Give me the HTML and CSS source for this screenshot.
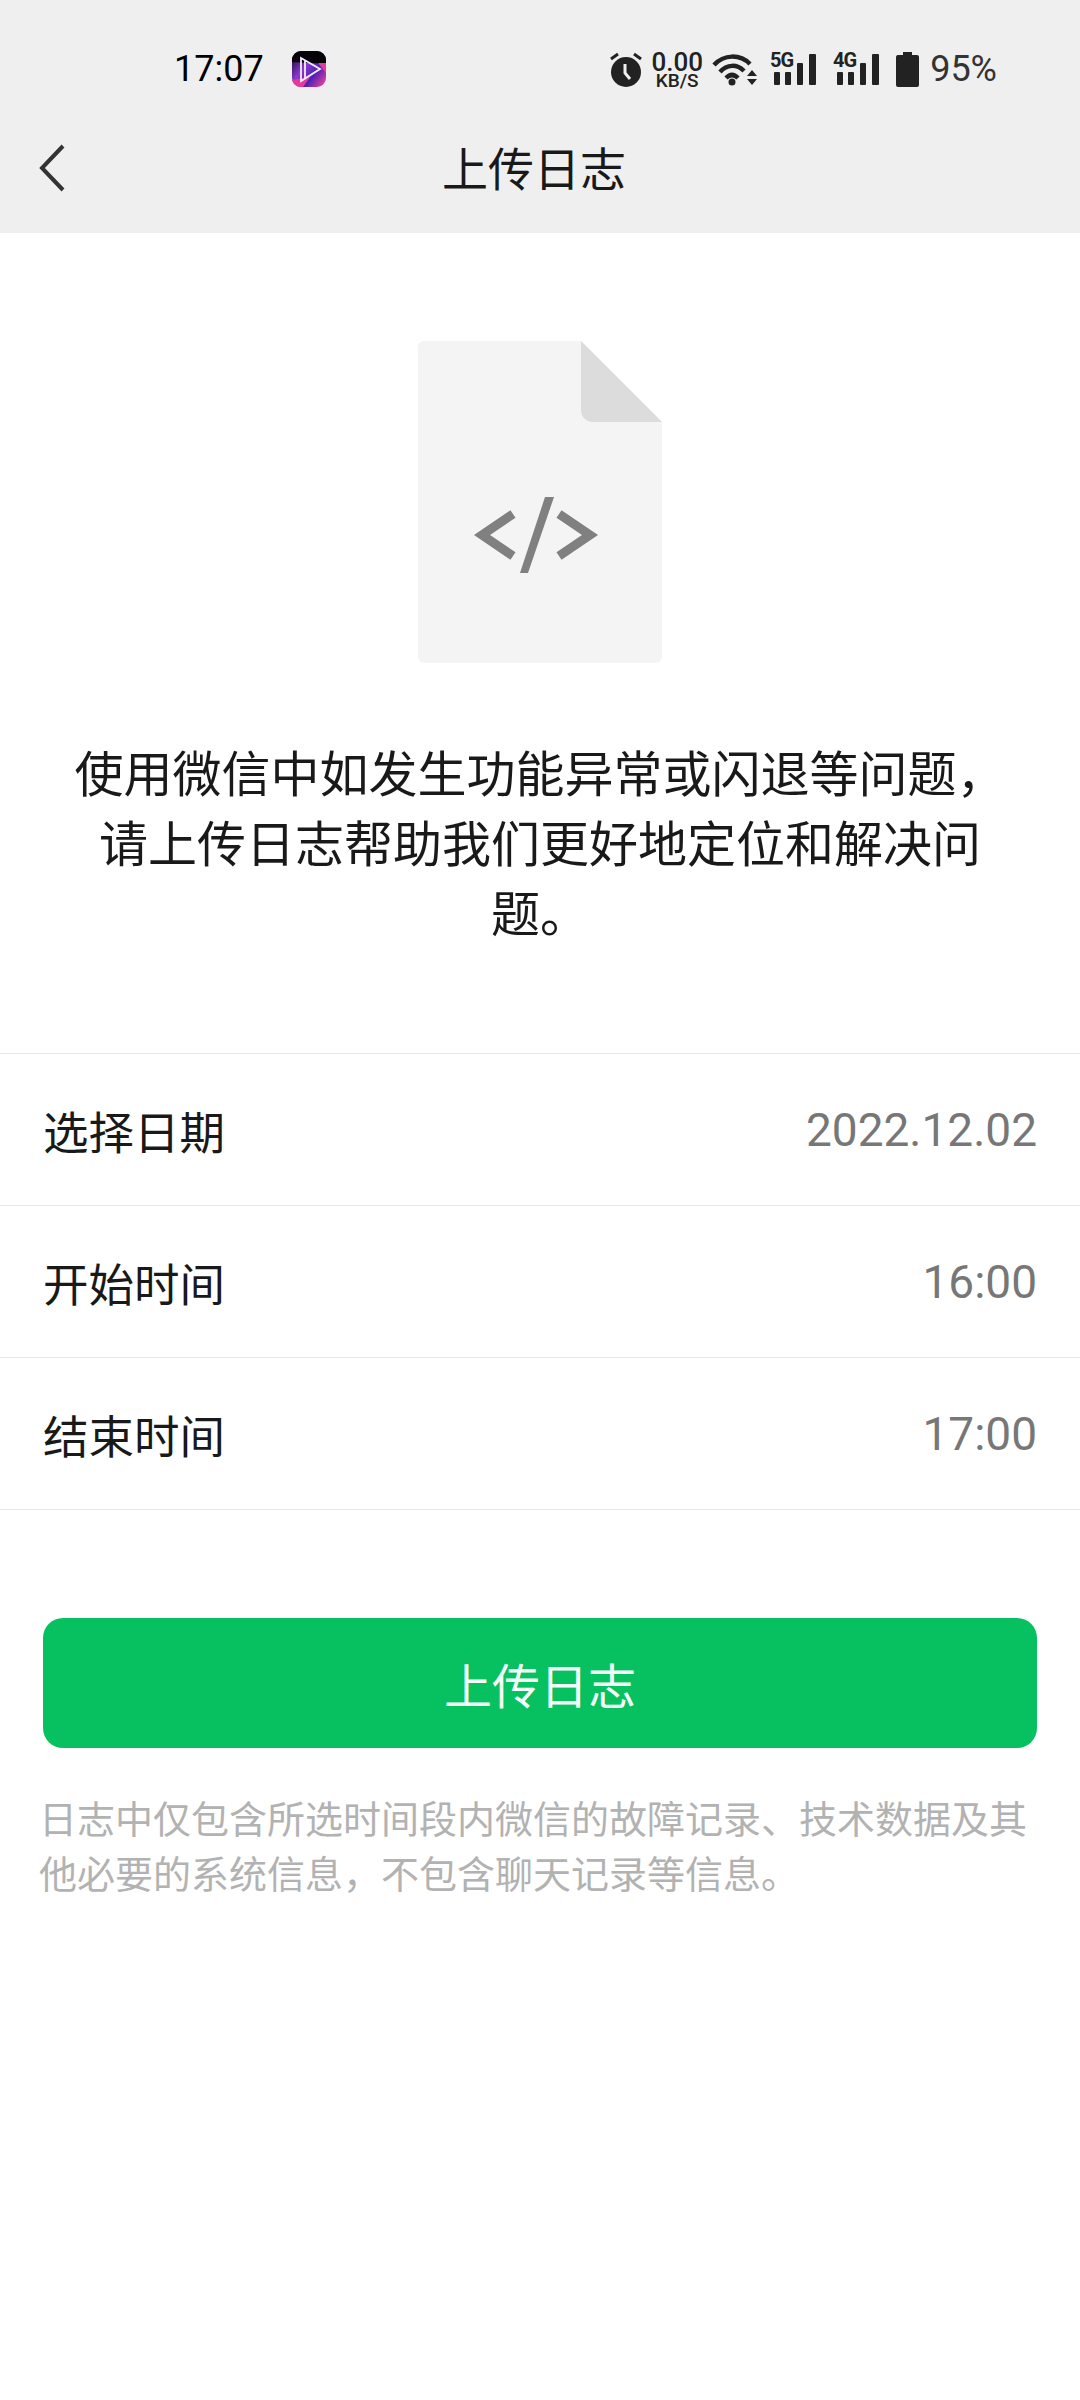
FILE: index.html
```html
<!DOCTYPE html>
<html lang="zh-CN">
<head>
    <meta charset="UTF-8">
    <meta name="viewport" content="width=device-width, initial-scale=1.0">
    <title>上传日志</title>
    <link rel="stylesheet" href="styles.css">
</head>
<body>
    <header class="top">
        <!-- Status bar -->
        <div class="status">
            <span class="time">17:07</span>
            <svg class="app-icon" width="34" height="36" viewBox="0 0 34 36">
                <defs>
                    <linearGradient id="appGlow" x1="0" y1="0.25" x2="0.9" y2="1">
                        <stop offset="0" stop-color="#2a0f50"/>
                        <stop offset="0.35" stop-color="#8a3ad0"/>
                        <stop offset="0.65" stop-color="#4b22b8"/>
                        <stop offset="1" stop-color="#ee3f9c"/>
                    </linearGradient>
                </defs>
                <rect width="34" height="36" rx="9" fill="url(#appGlow)"/>
                <path d="M0 9a9 9 0 0 1 9-9h16a9 9 0 0 1 9 9v4L0 11z" fill="#050308"/>
                <path d="M0 29L18 26 11 36H9a9 9 0 0 1-9-7zM26 12h8v10z" fill="#e8389a"/>
                <path d="M9 7l19 11L9 30zM13 10v17" fill="none" stroke="#f4eefc" stroke-width="1.8"/>
            </svg>
            <div class="status-right">
                <svg class="alarm" width="32" height="36" viewBox="0 0 32 36">
                    <circle cx="16" cy="21" r="15" fill="#222"/>
                    <path d="M15 13v9l5 6" fill="none" stroke="#efefef" stroke-width="3"/>
                    <path d="M1 8l7-5M31 8l-7-5" stroke="#222" stroke-width="3"/>
                </svg>
                <div class="speed">
                    <span class="speed-num">0.00</span>
                    <span class="speed-unit">KB/S</span>
                </div>
                <svg class="wifi" width="46" height="34" viewBox="0 0 46 34">
                    <path d="M2 13C12 2 28 2 38 12M8 20C15 12 25 12 32 19M14 26C18 22 22 22 26 26" fill="none" stroke="#222" stroke-width="4.5"/>
                    <circle cx="20" cy="30" r="3.5" fill="#222"/>
                    <path d="M35 24l5-6 5 6zM35 27l5 6 5-6z" fill="#222"/>
                </svg>
                <svg class="signal" width="46" height="36" viewBox="0 -4 46 36">
                    <text class="net-label" x="0" y="14">5G</text>
                    <rect x="4" y="19" width="6" height="13" rx="1" fill="#222"/>
                    <rect x="15" y="19" width="6" height="13" rx="1" fill="#222"/>
                    <rect x="27" y="10" width="6" height="22" rx="1" fill="#222"/>
                    <rect x="39" y="1" width="7" height="31" rx="1" fill="#222"/>
                </svg>
                <svg class="signal" width="46" height="36" viewBox="0 -4 46 36">
                    <text class="net-label" x="0" y="14">4G</text>
                    <rect x="4" y="19" width="6" height="13" rx="1" fill="#222"/>
                    <rect x="15" y="19" width="6" height="13" rx="1" fill="#222"/>
                    <rect x="27" y="10" width="6" height="22" rx="1" fill="#222"/>
                    <rect x="39" y="1" width="7" height="31" rx="1" fill="#222"/>
                </svg>
                <svg class="batt-icon" width="23" height="35" viewBox="0 0 23 35">
                    <path d="M7 0h9v3h5a2 2 0 0 1 2 2v28a2 2 0 0 1-2 2H2a2 2 0 0 1-2-2V5a2 2 0 0 1 2-2h5z" fill="#222"/>
                </svg>
                <span class="battery">95%</span>
            </div>
        </div>

        <!-- Title bar -->
        <div class="nav">
            <svg class="back" width="28" height="50" viewBox="0 0 28 50">
                <path d="M25 3L4 25l21 22" fill="none" stroke="#333" stroke-width="4"/>
            </svg>
            <h1>上传日志</h1>
        </div>
    </header>

    <main>
        <svg class="file-icon" width="244" height="322" viewBox="0 0 244 322">
            <path d="M6 0H163L244 81V316a6 6 0 0 1-6 6H6a6 6 0 0 1-6-6V6a6 6 0 0 1 6-6z" fill="#f4f4f4"/>
            <path d="M163 0L244 81H175a12 12 0 0 1-12-12z" fill="#dcdcdc"/>
            <path d="M95 173L64 194l31 21M141 173l31 21-31 21" fill="none" stroke="#808080" stroke-width="9"/>
            <path d="M127 156h9l-26 76h-8z" fill="#808080"/>
        </svg>

        <p class="desc">使用微信中如发生功能异常或闪退等问题，请上传日志帮助我们更好地定位和解决问题。</p>

        <div class="rows">
            <div class="row"><span>选择日期</span><span class="value">2022.12.02</span></div>
            <div class="row"><span>开始时间</span><span class="value">16:00</span></div>
            <div class="row"><span>结束时间</span><span class="value">17:00</span></div>
        </div>

        <button class="upload">上传日志</button>

        <p class="note">日志中仅包含所选时间段内微信的故障记录、技术数据及其他必要的系统信息，不包含聊天记录等信息。</p>
    </main>
</body>
</html>
```

FILE: styles.css
```css
body {
    margin: 0;
    width: 1080px;
    height: 2400px;
    overflow: hidden;
    background-color: #fff;
    color: #191919;
    font-family: Roboto, "Noto Sans CJK SC", sans-serif;
}

.top {
    height: 233px;
    background-color: #efefef;
    box-sizing: border-box;
    padding-top: 46px;
}

.status {
    display: flex;
    align-items: center;
    height: 46px;
    margin-bottom: 28px;
    padding: 0 83px 0 174px;
}

.time {
    font-size: 36px;
    color: #000;
}

.app-icon {
    margin-left: 28px;
}

.status-right {
    display: flex;
    align-items: center;
    margin-left: auto;
}

.speed {
    display: flex;
    flex-direction: column;
    align-items: center;
    width: 52px;
    margin-left: 9px;
    color: #222;
    font-weight: 500;
    line-height: 1;
}

.speed-num {
    font-size: 26px;
    height: 22px;
}

.speed-unit {
    font-size: 19px;
}

.wifi {
    margin-left: 9px;
}

.signal {
    margin: -4px 0 0 12px;
}

.signal + .signal {
    margin-left: 17px;
}

.batt-icon {
    margin-left: 17px;
}

.net-label {
    font-family: Roboto, sans-serif;
    font-size: 20px;
    font-weight: 700;
    letter-spacing: -1px;
    fill: #222;
}

.battery {
    margin-left: 11px;
    font-size: 36px;
    color: #333;
}

.nav {
    position: relative;
    display: flex;
    align-items: center;
    justify-content: center;
    height: 92px;
    padding-right: 12px;
}

.back {
    position: absolute;
    left: 38px;
    top: 23px;
}

h1 {
    margin: 0;
    font-size: 46px;
    font-weight: 400;
}

main {
    display: flex;
    flex-direction: column;
}

.file-icon {
    align-self: center;
    margin: 108px 0 0 0;
}

.desc {
    margin: 78px 0 0;
    padding: 0 74px;
    font-size: 49px;
    line-height: 70px;
    text-align: center;
}

.rows {
    margin-top: 102px;
    border-top: 1px solid #e8e8e8;
}

.row {
    display: flex;
    align-items: center;
    justify-content: space-between;
    height: 151px;
    padding: 0 43px;
    border-bottom: 1px solid #e8e8e8;
    font-size: 45.5px;
}

.value {
    color: #777;
    font-size: 46px;
}

.upload {
    margin: 108px 43px 0;
    height: 130px;
    border: none;
    border-radius: 20px;
    background-color: #07c160;
    color: #f5fff9;
    font-family: inherit;
    font-size: 48px;
    cursor: pointer;
}

.note {
    margin: 45px 43px 0 39px;
    font-size: 38px;
    line-height: 55px;
    color: #b2b2b2;
}
```
